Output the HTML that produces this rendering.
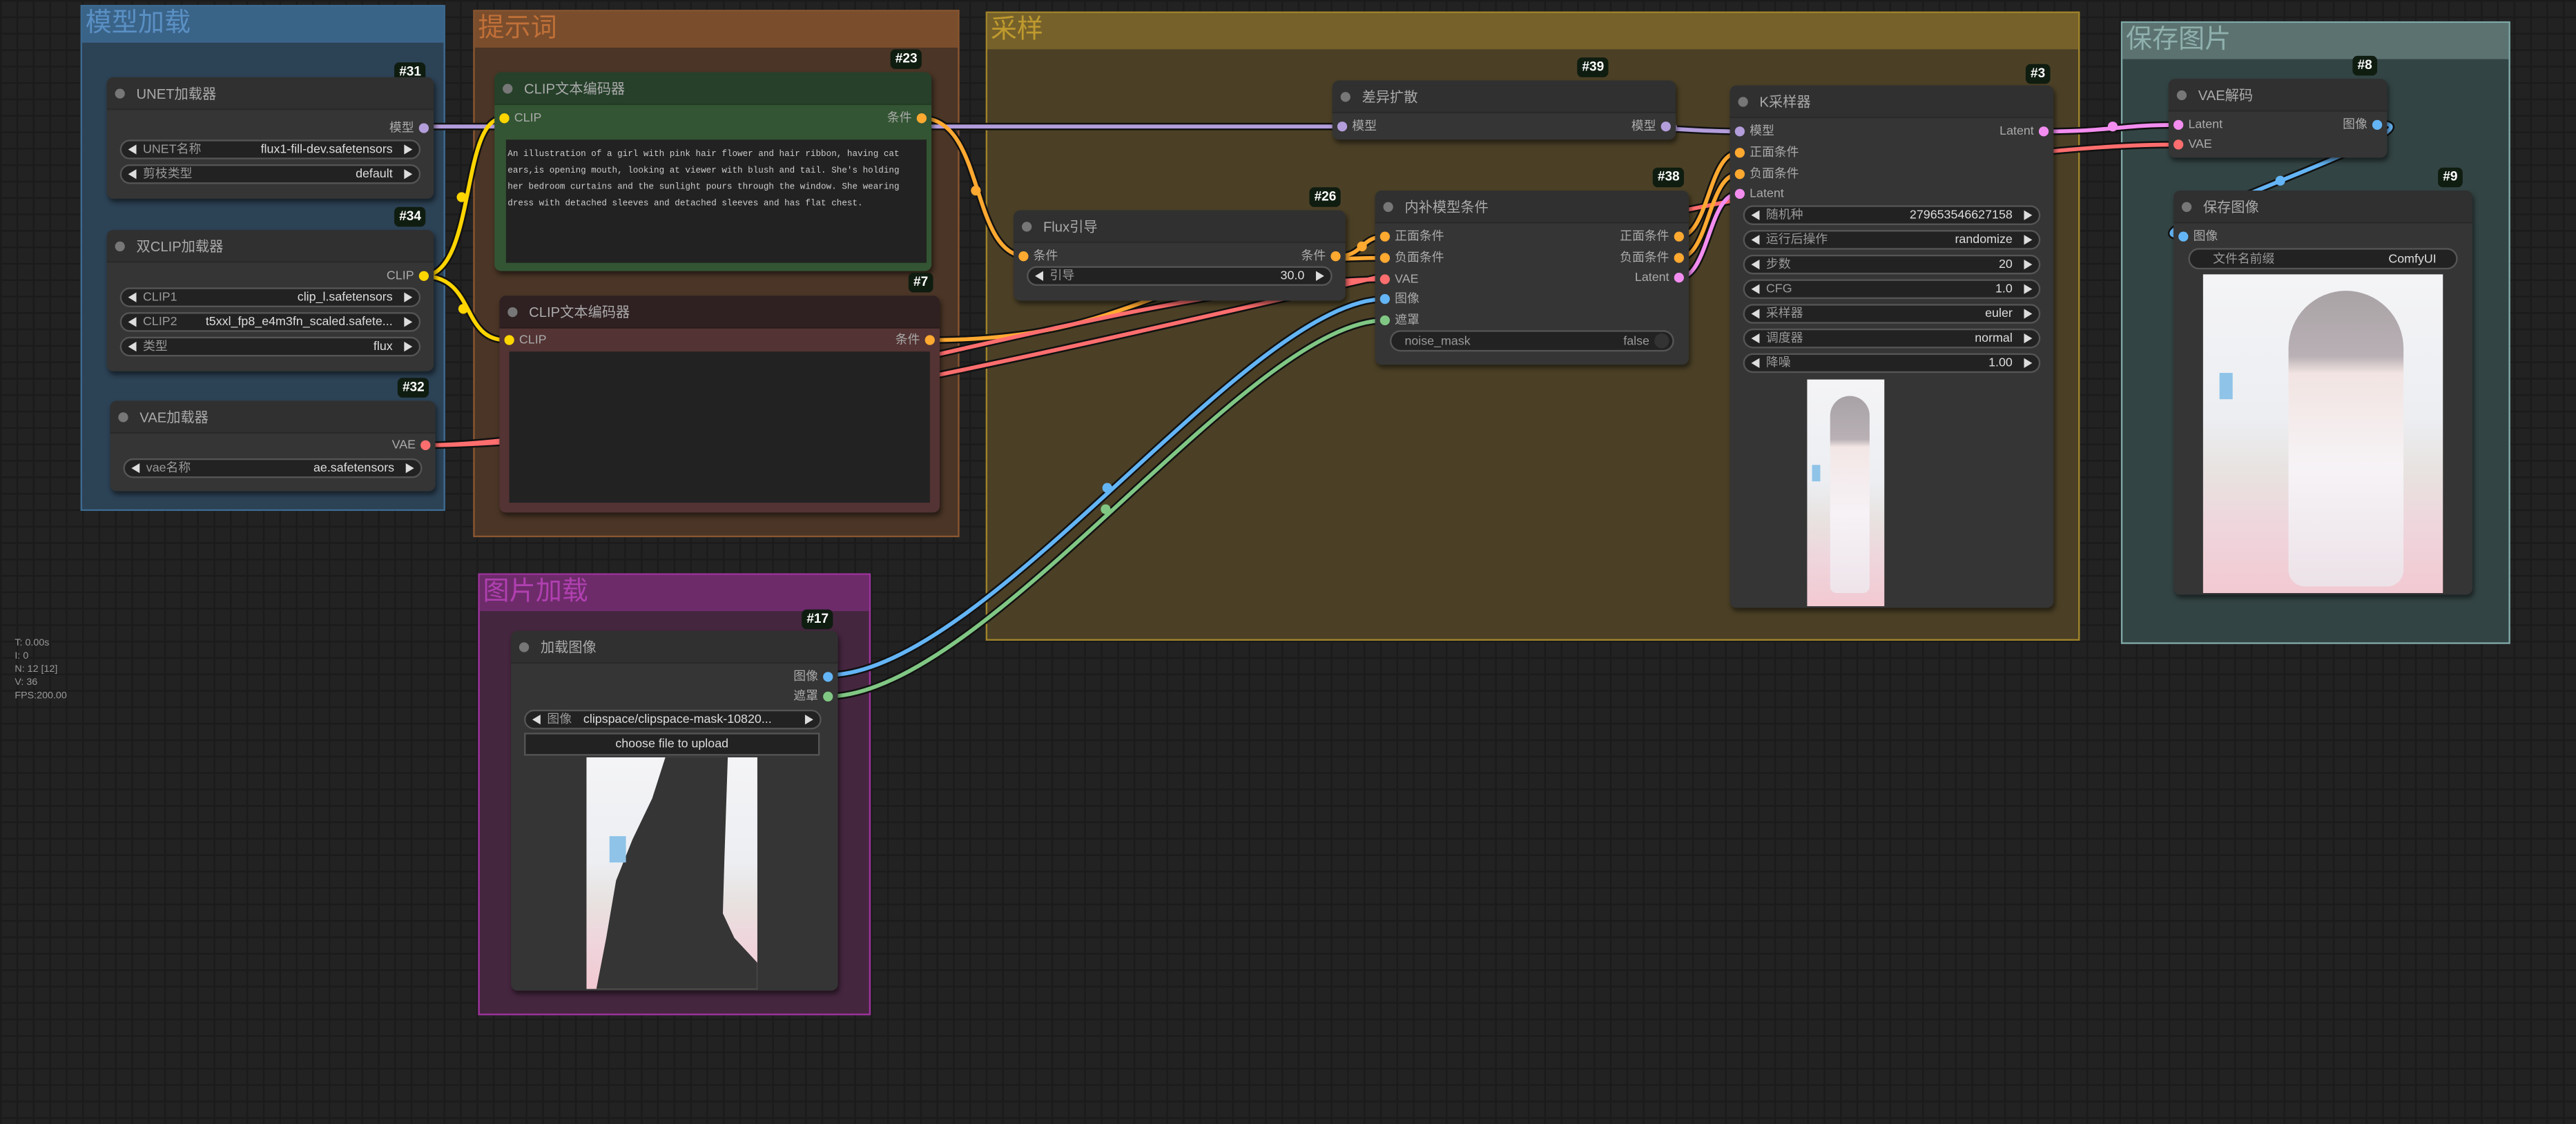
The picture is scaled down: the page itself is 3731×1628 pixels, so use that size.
<!DOCTYPE html>
<html><head><meta charset="utf-8"><style>
*{box-sizing:border-box;margin:0;padding:0}
html,body{width:3731px;height:1626px;overflow:hidden;background:#222}
#c{position:absolute;left:0;top:0;width:1568px;height:684px;transform:scale(2.37946);transform-origin:0 0;
background-color:#222;
background-image:linear-gradient(#1b1b1b 1px,transparent 1px),linear-gradient(90deg,#1b1b1b 1px,transparent 1px);
background-size:10px 10px;font-family:"Liberation Sans","Noto Sans CJK SC",sans-serif;overflow:hidden}
.g{position:absolute;border:1px solid}
.gh{height:22px;font-size:16px;line-height:22px;padding-left:2px}
.n{position:absolute;background:#353535;border-radius:4px;box-shadow:1px 2px 3px rgba(0,0,0,.5)}
.t{height:20px;line-height:20px;font-size:8.5px;color:#aaa;padding-left:18px;border-bottom:1px solid #2a2a2a;background:#303030;border-radius:4px 4px 0 0;position:relative}
.t:before{content:"";position:absolute;left:5px;top:7px;width:6px;height:6px;border-radius:50%;background:#777}
.b{position:absolute;background:#0f1c10;color:#fff;font-size:8px;font-weight:bold;padding:1px 3px;border-radius:3px;height:12px;line-height:10px}
.s{position:absolute;font-size:7.5px;color:#aaa;line-height:10px;height:10px}
.s.i{left:12px}.s.o{right:12px;text-align:right}
.s:after{content:"";position:absolute;top:2px;width:6px;height:6px;border-radius:50%;background:var(--c)}
.s.i:after{left:-9px}.s.o:after{right:-9px}
.w{position:absolute;left:8px;right:8px;height:12px;border:1px solid #555;border-radius:7px;background:#222;font-size:7.5px;color:#999;line-height:10px;padding:0 16px 0 13px}
.w:before{content:"";position:absolute;left:4px;top:2px;border:3px solid transparent;border-right:5px solid #ddd;border-left:0}
.w:after{content:"";position:absolute;right:4px;top:2px;border:3px solid transparent;border-left:5px solid #ddd;border-right:0}
.w .v{position:absolute;right:16px;top:0;color:#ddd}
.ta{position:absolute;background:#222;font-family:"Liberation Mono",monospace;font-size:5.3px;color:#ccc;line-height:10px;padding:4px 1px;overflow:hidden;white-space:nowrap}
.img{position:absolute;background:linear-gradient(180deg,#f4f4f6 0%,#eceef2 45%,#e8e2e0 62%,#efd5dc 80%,#f2c9d2 100%);overflow:hidden}
svg{position:absolute;left:0;top:0}
</style></head><body><div id="c">

<div class="g" style="left:49px;top:3px;width:222px;height:308px;border-color:#3d6a90;background:#2c4255"><div class="gh" style="background:#3a6388;color:#5a90c4">模型加载</div></div>
<div class="g" style="left:288px;top:6px;width:296px;height:321px;border-color:#8a5630;background:#4a3526"><div class="gh" style="background:#7a4d2c;color:#c07038">提示词</div></div>
<div class="g" style="left:600px;top:7px;width:666px;height:383px;border-color:#a0832a;background:#4b4026"><div class="gh" style="background:#76612a;color:#bf9a2e">采样</div></div>
<div class="g" style="left:1291px;top:13px;width:237px;height:379px;border-color:#7fa8a6;background:#334444"><div class="gh" style="background:#5b7271;color:#8fb0ad">保存图片</div></div>
<div class="g" style="left:291px;top:349px;width:239px;height:269px;border-color:#a033a0;background:#45263f"><div class="gh" style="background:#6d2b6a;color:#b040b0">图片加载</div></div>

<svg width="1568" height="684" viewBox="0 0 1568 684">
<g fill="none" stroke="#111" stroke-width="4.5" stroke-linecap="round">
<path d="M257,77 C500,77 600,77 816,77"/><path d="M978,77 C1010,77 1030,80 1058,80"/>
<path d="M257,168 C290,168 280,72 306,72"/><path d="M257,168 C290,168 280,207 308,207"/>
<path d="M561,72 C600,72 590,156 625,156"/><path d="M566,207 C700,207 700,157 843,157"/>
<path d="M814,156 C830,156 828,144 843,144"/>
<path d="M257,271 C403,271 697,170 843,170"/><path d="M257,271 C524,271 1059,88 1326,88"/>
<path d="M1022,144 C1040,144 1040,93 1058,93"/><path d="M1022,157 C1040,157 1040,106 1058,106"/><path d="M1022,169 C1040,169 1040,118 1058,118"/>
<path d="M503,411 C600,411 760,182 843,182"/><path d="M503,424 C600,424 760,195 843,195"/>
<path d="M1245,80 C1285,80 1290,76 1326,76"/><path d="M1447,75 C1500,75 1280,144 1329,144"/>
</g>
<g fill="none" stroke-width="2.4" stroke-linecap="round">
<path stroke="#b39ddb" d="M257,77 C500,77 600,77 816,77"/><path stroke="#b39ddb" d="M978,77 C1010,77 1030,80 1058,80"/>
<path stroke="#ffd500" d="M257,168 C290,168 280,72 306,72"/><path stroke="#ffd500" d="M257,168 C290,168 280,207 308,207"/>
<path stroke="#ffa931" d="M561,72 C600,72 590,156 625,156"/><path stroke="#ffa931" d="M566,207 C700,207 700,157 843,157"/>
<path stroke="#ffa931" d="M814,156 C830,156 828,144 843,144"/>
<path stroke="#ff6e6e" d="M257,271 C403,271 697,170 843,170"/><path stroke="#ff6e6e" d="M257,271 C524,271 1059,88 1326,88"/>
<path stroke="#ffa931" d="M1022,144 C1040,144 1040,93 1058,93"/><path stroke="#ffa931" d="M1022,157 C1040,157 1040,106 1058,106"/><path stroke="#f38df0" d="M1022,169 C1040,169 1040,118 1058,118"/>
<path stroke="#64b5f6" d="M503,411 C600,411 760,182 843,182"/><path stroke="#81c784" d="M503,424 C600,424 760,195 843,195"/>
<path stroke="#f38df0" d="M1245,80 C1285,80 1290,76 1326,76"/><path stroke="#64b5f6" d="M1447,75 C1500,75 1280,144 1329,144"/>
</g>
<g>
<circle cx="281" cy="120" r="3" fill="#ffd500"/><circle cx="282" cy="188" r="3" fill="#ffd500"/>
<circle cx="594" cy="116" r="3" fill="#ffa931"/><circle cx="1018" cy="78" r="3" fill="#b39ddb"/>
<circle cx="674" cy="297" r="3" fill="#64b5f6"/><circle cx="673" cy="310" r="3" fill="#81c784"/>
<circle cx="1286" cy="77" r="3" fill="#f38df0"/><circle cx="1388" cy="110" r="3" fill="#64b5f6"/>
<circle cx="829" cy="150" r="3" fill="#ffa931"/>
</g>
</svg>

<div class="b" style="left:240px;top:38px">#31</div>
<div class="n" style="left:65px;top:47px;width:199px;height:74px"><div class="t">UNET加载器</div>
<div class="s o" style="top:26px;--c:#b39ddb">模型</div>
<div class="w" style="top:38px">UNET名称<span class="v">flux1-fill-dev.safetensors</span></div>
<div class="w" style="top:53px">剪枝类型<span class="v">default</span></div></div>

<div class="b" style="left:240px;top:126px">#34</div>
<div class="n" style="left:65px;top:140px;width:199px;height:86px"><div class="t">双CLIP加载器</div>
<div class="s o" style="top:23px;--c:#ffd500">CLIP</div>
<div class="w" style="top:35px">CLIP1<span class="v">clip_l.safetensors</span></div>
<div class="w" style="top:50px">CLIP2<span class="v">t5xxl_fp8_e4m3fn_scaled.safete...</span></div>
<div class="w" style="top:65px">类型<span class="v">flux</span></div></div>

<div class="b" style="left:242px;top:230px">#32</div>
<div class="n" style="left:67px;top:244px;width:198px;height:55px"><div class="t">VAE加载器</div>
<div class="s o" style="top:22px;--c:#ff6e6e">VAE</div>
<div class="w" style="top:35px">vae名称<span class="v">ae.safetensors</span></div></div>

<div class="b" style="left:542px;top:30px">#23</div>
<div class="n" style="left:301px;top:44px;width:266px;height:121px;background:#335533"><div class="t" style="background:#26402a;border-color:#223a24">CLIP文本编码器</div>
<div class="s i" style="top:23px;--c:#ffd500">CLIP</div>
<div class="s o" style="top:23px;--c:#ffa931">条件</div>
<div class="ta" style="left:7px;top:41px;width:256px;height:75px">An illustration of a girl with pink hair flower and hair ribbon, having cat<br>ears,is opening mouth, looking at viewer with blush and tail. She's holding<br>her bedroom curtains and the sunlight pours through the window. She wearing<br>dress with detached sleeves and detached sleeves and has flat chest.</div></div>

<div class="b" style="left:553px;top:166px">#7</div>
<div class="n" style="left:304px;top:180px;width:268px;height:132px;background:#533333"><div class="t" style="background:#2f2022;border-color:#2a1c1d">CLIP文本编码器</div>
<div class="s i" style="top:22px;--c:#ffd500">CLIP</div>
<div class="s o" style="top:22px;--c:#ffa931">条件</div>
<div class="ta" style="left:6px;top:34px;width:256px;height:92px"></div></div>

<div class="b" style="left:960px;top:35px">#39</div>
<div class="n" style="left:811px;top:49px;width:209px;height:36px"><div class="t">差异扩散</div>
<div class="s i" style="top:23px;--c:#b39ddb">模型</div>
<div class="s o" style="top:23px;--c:#b39ddb">模型</div></div>

<div class="b" style="left:797px;top:114px">#26</div>
<div class="n" style="left:617px;top:128px;width:202px;height:55px"><div class="t">Flux引导</div>
<div class="s i" style="top:23px;--c:#ffa931">条件</div>
<div class="s o" style="top:23px;--c:#ffa931">条件</div>
<div class="w" style="top:34px">引导<span class="v">30.0</span></div></div>

<div class="b" style="left:1006px;top:102px">#38</div>
<div class="n" style="left:837px;top:116px;width:191px;height:106px"><div class="t">内补模型条件</div>
<div class="s i" style="top:23px;--c:#ffa931">正面条件</div><div class="s o" style="top:23px;--c:#ffa931">正面条件</div>
<div class="s i" style="top:36px;--c:#ffa931">负面条件</div><div class="s o" style="top:36px;--c:#ffa931">负面条件</div>
<div class="s i" style="top:49px;--c:#ff6e6e">VAE</div><div class="s o" style="top:48px;--c:#f38df0">Latent</div>
<div class="s i" style="top:61px;--c:#64b5f6">图像</div>
<div class="s i" style="top:74px;--c:#81c784">遮罩</div>
<div style="position:absolute;left:9px;right:9px;top:85px;height:13px;border:1px solid #555;border-radius:7px;background:#222;font-size:7.5px;color:#999;line-height:11px;padding-left:8px">noise_mask<span style="position:absolute;right:14px">false</span><span style="position:absolute;right:2px;top:1px;width:9px;height:9px;border-radius:50%;background:#333"></span></div></div>

<div class="b" style="left:1233px;top:39px">#3</div>
<div class="n" style="left:1053px;top:52px;width:197px;height:318px"><div class="t">K采样器</div>
<div class="s i" style="top:23px;--c:#b39ddb">模型</div><div class="s o" style="top:23px;--c:#f38df0">Latent</div>
<div class="s i" style="top:36px;--c:#ffa931">正面条件</div>
<div class="s i" style="top:49px;--c:#ffa931">负面条件</div>
<div class="s i" style="top:61px;--c:#f38df0">Latent</div>
<div class="w" style="top:73px">随机种<span class="v">279653546627158</span></div>
<div class="w" style="top:88px">运行后操作<span class="v">randomize</span></div>
<div class="w" style="top:103px">步数<span class="v">20</span></div>
<div class="w" style="top:118px">CFG<span class="v">1.0</span></div>
<div class="w" style="top:133px">采样器<span class="v">euler</span></div>
<div class="w" style="top:148px">调度器<span class="v">normal</span></div>
<div class="w" style="top:163px">降噪<span class="v">1.00</span></div>
<div class="img" style="left:47px;top:179px;width:47px;height:138px"><div style="position:absolute;left:14px;top:10px;width:24px;height:120px;border-radius:12px 12px 4px 4px;background:linear-gradient(#a8a2a6 0,#b8b0b4 22%,#f3e7e6 26%,#f6f2f6 60%,#eee4ea 100%)"></div><div style="position:absolute;left:3px;top:52px;width:5px;height:10px;background:#8fc3e8"></div></div></div>

<div class="b" style="left:1432px;top:34px">#8</div>
<div class="n" style="left:1320px;top:48px;width:133px;height:48px"><div class="t">VAE解码</div>
<div class="s i" style="top:23px;--c:#f38df0">Latent</div><div class="s o" style="top:23px;--c:#64b5f6">图像</div>
<div class="s i" style="top:35px;--c:#ff6e6e">VAE</div></div>

<div class="b" style="left:1484px;top:102px">#9</div>
<div class="n" style="left:1323px;top:116px;width:182px;height:246px"><div class="t">保存图像</div>
<div class="s i" style="top:23px;--c:#64b5f6">图像</div>
<div style="position:absolute;left:9px;right:9px;top:35px;height:13px;border:1px solid #555;border-radius:7px;background:#222;font-size:7.5px;color:#999;line-height:11px;padding-left:14px">文件名前缀<span style="position:absolute;right:12px;color:#ddd">ComfyUI</span></div>
<div class="img" style="left:18px;top:51px;width:146px;height:194px"><div style="position:absolute;left:52px;top:10px;width:70px;height:180px;border-radius:35px 35px 10px 10px;background:linear-gradient(#aaa3a6 0,#b8b0b4 22%,#f2e4e2 28%,#f6f3f6 60%,#ece2e8 100%)"></div><div style="position:absolute;left:10px;top:60px;width:8px;height:16px;background:#8fc3e8"></div></div></div>

<div class="b" style="left:488px;top:371px">#17</div>
<div class="n" style="left:311px;top:384px;width:199px;height:219px"><div class="t">加载图像</div>
<div class="s o" style="top:23px;--c:#64b5f6">图像</div>
<div class="s o" style="top:35px;--c:#81c784">遮罩</div>
<div class="w" style="top:48px;left:8px;right:10px;color:#999">图像 <span style="color:#ddd;margin-left:5px">clipspace/clipspace-mask-10820...</span></div>
<div style="position:absolute;left:8px;right:11px;top:62px;height:14px;border:1px solid #555;background:#222;font-size:7.5px;color:#ddd;text-align:center;line-height:12px">choose file to upload</div>
<div class="img" style="left:46px;top:77px;width:104px;height:141px">
<svg width="104" height="141" viewBox="0 0 104 141"><path d="M48,0 L86,0 L85,30 L84,60 L83,95 L90,110 L104,125 L104,141 L6,141 L12,110 L18,75 L28,50 L40,25 Z" fill="#353535"/><rect x="14" y="48" width="10" height="16" fill="#8fc3e8"/></svg></div></div>

<div style="position:absolute;left:9px;top:388px;font-size:6px;color:#999;line-height:8px">T: 0.00s<br>I: 0<br>N: 12 [12]<br>V: 36<br>FPS:200.00</div>
</div></body></html>
